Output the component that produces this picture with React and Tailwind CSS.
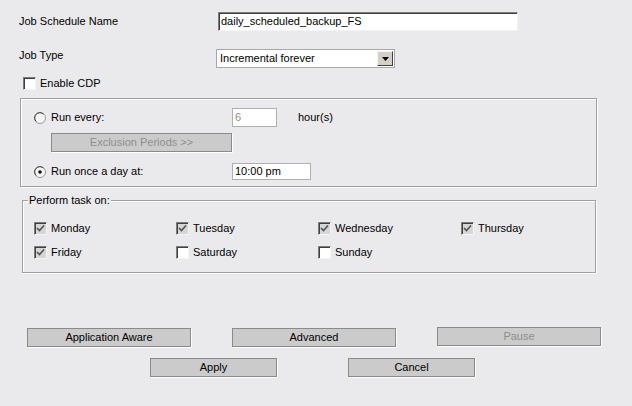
import React from 'react';

const sunken = 'border border-t-[#7c7c7c] border-l-[#7c7c7c] border-b-[#f4f4f4] border-r-[#f4f4f4] shadow-[inset_1px_1px_0_#404040]';
const etched = 'border border-[#a0a0a0] shadow-[1px_1px_0_#ffffff,inset_1px_1px_0_#ffffff]';

function CheckBox({ checked, label }) {
  return (
    <div className="flex items-center gap-[4px] h-[13px]">
      <span className={`w-[13px] h-[13px] flex items-center justify-center ${sunken} ${checked ? 'bg-[#d6d6d6]' : 'bg-white'}`}>
        {checked && (
          <svg width="9" height="9" viewBox="0 0 9 9">
            <path d="M1 4 L3.5 6.5 L8 1.5" fill="none" stroke="#555555" strokeWidth="1.7" />
          </svg>
        )}
      </span>
      <span>{label}</span>
    </div>
  );
}

function Radio({ checked, label }) {
  return (
    <div className="flex items-center gap-[5px]">
      <svg width="12" height="12" viewBox="0 0 12 12">
        <circle cx="6" cy="6" r="5.5" fill="#f4f4f4" stroke="#9a9a9a" />
        <path d="M2.2 9.5 A5 5 0 0 1 9.5 2.2" fill="none" stroke="#404040" strokeWidth="1" />
        {checked && <circle cx="6" cy="6" r="1.8" fill="#111" />}
      </svg>
      <span>{label}</span>
    </div>
  );
}

function Button({ children, disabled, className = '' }) {
  return (
    <button
      className={`h-[19px] bg-[#cbcbcb] border border-[#8a8a8a] shadow-[1px_1px_0_#ffffff] flex items-center justify-center leading-none ${disabled ? 'text-[#8e8e8e]' : 'text-black'} ${className}`}
    >
      {children}
    </button>
  );
}

export default function App() {
  const days = [
    { label: 'Monday', checked: true },
    { label: 'Tuesday', checked: true },
    { label: 'Wednesday', checked: true },
    { label: 'Thursday', checked: true },
    { label: 'Friday', checked: true },
    { label: 'Saturday', checked: false },
    { label: 'Sunday', checked: false },
  ];

  return (
    <div
      className="w-[632px] h-[406px] bg-[#eaeaec] text-[11px] leading-[13px] text-black flex flex-col overflow-hidden"
      style={{ fontFamily: '"Liberation Sans", Arial, sans-serif' }}
    >
      {/* name */}
      <div className="mt-[12px] pl-[19px] flex items-center">
        <span className="w-[199px]">Job Schedule Name</span>
        <div className={`w-[300px] h-[19px] bg-white px-[2px] flex items-center ${sunken}`}>daily_scheduled_backup_FS</div>
      </div>

      {/* job type */}
      <div className="mt-[18px] pl-[19px] flex items-center">
        <span className="w-[197px] -mt-[6px]">Job Type</span>
        <div className="w-[179px] h-[19px] bg-white border border-[#a8a8a8] flex items-center justify-between pl-[3px] pr-[1px]">
          <span>Incremental forever</span>
          <span className="w-[16px] h-[15px] bg-[#d4d0c8] border border-t-[#f4f4f4] border-l-[#f4f4f4] border-b-[#404040] border-r-[#404040] flex items-center justify-center">
            <svg width="7" height="4" viewBox="0 0 7 4">
              <path d="M0 0 H7 L3.5 4 Z" fill="#000" />
            </svg>
          </span>
        </div>
      </div>

      {/* cdp */}
      <div className="mt-[9px] pl-[23px]">
        <CheckBox checked={false} label="Enable CDP" />
      </div>

      {/* schedule group */}
      <div className={`mt-[8px] ml-[20px] w-[577px] h-[89px] ${etched} pl-[13px] pt-[9px] flex flex-col`}>
        <div className="flex items-center h-[19px]">
          <div className="w-[198px]">
            <Radio checked={false} label="Run every:" />
          </div>
          <div className="w-[45px] h-[19px] bg-white border border-[#b0b0b0] pl-[2px] flex items-center text-[#8e8e8e]">6</div>
          <span className="ml-[21px]">hour(s)</span>
        </div>
        <div className="mt-[6px] pl-[17px]">
          <Button disabled className="w-[181px]">Exclusion Periods &gt;&gt;</Button>
        </div>
        <div className="mt-[11px] flex items-center h-[17px]">
          <div className="w-[198px]">
            <Radio checked label="Run once a day at:" />
          </div>
          <div className="w-[79px] h-[17px] bg-white border border-[#b0b0b0] pl-[2px] flex items-center">10:00 pm</div>
        </div>
      </div>

      {/* days group */}
      <div className={`relative mt-[13px] ml-[22px] w-[574px] h-[73px] ${etched} pl-[11px] pt-[21px]`}>
        <span className="absolute left-[5px] -top-[7px] bg-[#eaeaec] px-[1px]">Perform task on:</span>
        <div className="grid grid-cols-[142px_142px_143px_100px] gap-y-[11px]">
          {days.map((d) => (
            <CheckBox key={d.label} checked={d.checked} label={d.label} />
          ))}
        </div>
      </div>

      {/* buttons */}
      <div className="mt-[55px] pl-[27px] flex gap-[41px] items-start">
        <Button className="w-[164px]">Application Aware</Button>
        <Button className="w-[164px]">Advanced</Button>
        <Button disabled className="w-[164px] -mt-[1px]">Pause</Button>
      </div>
      <div className="mt-[11px] pl-[150px] flex gap-[71px]">
        <Button className="w-[127px]">Apply</Button>
        <Button className="w-[127px]">Cancel</Button>
      </div>
    </div>
  );
}
